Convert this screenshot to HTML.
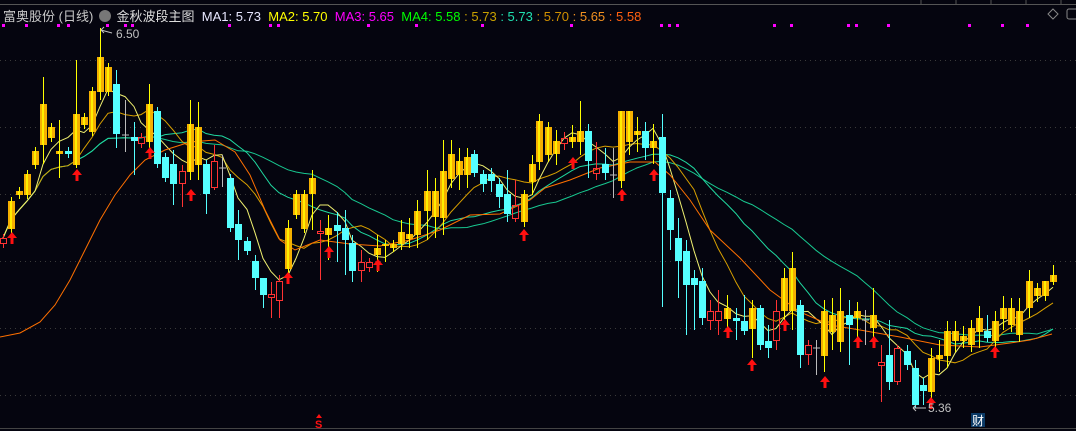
<!DOCTYPE html>
<html><head><meta charset="utf-8"><style>
html,body{margin:0;padding:0;background:#05050f;width:1076px;height:431px;overflow:hidden;font-family:"Liberation Sans","Noto Sans CJK SC",sans-serif}
.hd{position:absolute;left:3px;top:6px;font-size:13px;white-space:nowrap;color:#c8c8c8}
</style></head><body>
<svg id="s" width="1076" height="431" style="position:absolute;left:0;top:0" xmlns="http://www.w3.org/2000/svg">
<line x1="0" y1="4.5" x2="1076" y2="4.5" stroke="#555" stroke-width="1"/>
<g stroke="#555"><line x1="921" y1="0" x2="921" y2="4"/><line x1="956" y1="0" x2="956" y2="4"/><line x1="991" y1="0" x2="991" y2="4"/><line x1="1026" y1="0" x2="1026" y2="4"/><line x1="1061" y1="0" x2="1061" y2="4"/></g>
<g stroke="#3a3a3a" stroke-dasharray="1,4">
<line x1="0" y1="60.5" x2="1076" y2="60.5"/><line x1="0" y1="127.5" x2="1076" y2="127.5"/><line x1="0" y1="194.5" x2="1076" y2="194.5"/><line x1="0" y1="261.5" x2="1076" y2="261.5"/><line x1="0" y1="328.5" x2="1076" y2="328.5"/><line x1="0" y1="395.5" x2="1076" y2="395.5"/>
</g>
<line x1="0" y1="428.5" x2="1076" y2="428.5" stroke="#444"/>
<path d="M1053 9 L1058 14 L1053 19 L1048 14Z" fill="none" stroke="#888"/>
<rect x="1067" y="9" width="12" height="10" rx="2" fill="none" stroke="#888"/>
<g id="dots" fill="#ff00ff"></g>
<g id="ma"></g>
<g id="cd"></g>
<g id="ar" fill="#ff1010"></g>
<text x="116" y="38" fill="#c0c0c0" font-size="12">6.50</text>
<path d="M101 30 L104 27 M101 30 L112 33 M101 30 L104 33" stroke="#c0c0c0" fill="none"/>
<text x="928" y="412" fill="#c0c0c0" font-size="12">5.36</text>
<path d="M913 408 L926 408 M913 408 L916 405 M913 408 L916 411" stroke="#c0c0c0" fill="none"/>
<rect x="971" y="413" width="14" height="14" fill="#0b3a66"/>
<text x="972" y="425" fill="#fff" font-size="12">财</text>
<path d="M319 414 L322 418 L316 418Z" fill="#ff1010"/>
<text x="315" y="428" fill="#ff1010" font-size="11" font-weight="bold">S</text>
</svg>
<div class="hd">富奥股份 (日线) <span style="display:inline-block;width:12px;height:12px;border-radius:6px;background:#777;vertical-align:-1px;margin:0 2px"></span> <span style="color:#ddd">金秋波段主图</span>&nbsp; <span style="color:#e8e8ff">MA1: 5.73</span>&nbsp; <span style="color:#ffff00">MA2: 5.70</span>&nbsp; <span style="color:#ff00ff">MA3: 5.65</span>&nbsp; <span style="color:#00ff00">MA4: 5.58</span> <span style="color:#c8a000">: 5.73</span> <span style="color:#20e0b0">: 5.73</span> <span style="color:#d09000">: 5.70</span> <span style="color:#f09020">: 5.65</span> <span style="color:#ff6010">: 5.58</span></div>
<script>
var NS="http://www.w3.org/2000/svg";
function el(p,t,a){var e=document.createElementNS(NS,t);for(var k in a)e.setAttribute(k,a[k]);p.appendChild(e);return e;}
var D=[[3,238,244,'r'],[11,201,229,'g'],[19,191,195,'g'],[27,174,195,'g'],[35,151,165,'g'],[43,104,145,'g',77,164],[51,127,138,'g'],[59,151,154,'g',120,178],[68,151,154,'c'],[76,114,165,'g',60,168],[84,117,125,'g'],[92,91,132,'g'],[100,57,92,'g',28,100],[108,67,92,'g'],[116,84,134,'c',70,148],[125,134,136,'w',100,152],[134,137,141,'c',122,175],[141,137,144,'r'],[149,104,142,'g',84,150],[157,111,164,'c'],[165,157,178,'c'],[173,164,184,'c',150,205],[182,171,184,'r',165,207],[190,124,172,'g',100,180],[198,127,165,'g',102,180],[206,164,194,'c',160,214],[214,161,188,'r',145,190],[222,167,169,'w',155,187],[230,178,228,'c'],[238,224,240,'c',210,260],[247,241,251,'c'],[255,261,278,'c',255,290],[263,278,295,'c',280,308],[271,294,298,'r',282,318],[279,281,301,'r',275,318],[288,228,269,'g',220,280],[296,194,215,'g'],[304,194,229,'g'],[312,178,194,'g',170,230],[320,231,234,'r',220,280],[328,228,235,'g',215,260],[337,225,231,'c',212,262],[345,228,240,'c',210,275],[352,243,271,'c',235,282],[361,262,271,'r',250,282],[369,262,268,'r'],[377,248,255,'g',235,272],[385,244,246,'g',240,262],[393,244,248,'g'],[401,232,244,'g',220,250],[409,234,239,'g',218,248],[417,211,235,'g',200,248],[427,191,211,'g',170,240],[435,191,217,'g',178,238],[443,171,218,'g',140,235],[451,154,179,'g',140,188],[459,161,175,'g',148,190],[467,157,175,'g',148,188],[474,154,173,'c'],[483,174,184,'c',170,192],[491,174,181,'c',168,192],[499,184,197,'c',178,208],[507,194,214,'c',170,222],[515,205,219,'r',180,222],[524,194,222,'g',190,227],[532,164,182,'g',155,195],[539,121,162,'g',114,170],[548,127,155,'g',122,162],[556,141,154,'g',130,165],[564,138,144,'r',132,150],[572,137,142,'g',125,148],[580,131,142,'g',101,155],[588,131,161,'c',124,178],[596,168,174,'r',142,180],[605,164,173,'c',148,180],[613,174,176,'w',148,198],[621,111,181,'g',111,188],[629,111,142,'g',111,155],[637,131,135,'g',117,152],[645,131,148,'c',122,160],[653,141,148,'g',124,164],[662,137,193,'c',114,307],[670,198,230,'c',190,250],[678,238,261,'c',218,298],[686,251,285,'c',240,335],[694,278,285,'c',270,330],[702,281,318,'c',268,325],[710,311,321,'r',300,330],[718,311,321,'r',290,335],[727,308,319,'g',295,330],[736,318,321,'c',308,340],[744,321,331,'c',295,335],[752,308,329,'g',300,358],[760,308,345,'c',305,350],[768,341,348,'c',325,358],[776,311,341,'r',300,350],[784,278,311,'g',268,320],[792,268,311,'g',252,330],[800,305,355,'c',300,368],[808,345,355,'r',340,365],[816,347,349,'w',340,375],[824,311,356,'g',300,372],[832,315,332,'g',298,350],[840,311,342,'g',288,352],[849,315,325,'c',300,365],[857,311,318,'g',302,338],[865,319,321,'w',310,345],[873,315,328,'g',288,338],[881,362,366,'r',345,402],[889,355,382,'c',320,390],[897,348,382,'r',345,385],[907,351,365,'c',345,370],[915,368,405,'c',360,408],[923,385,391,'c',378,405],[931,358,392,'g',348,398],[939,355,359,'g',340,372],[947,331,356,'g',321,368],[955,331,341,'g',321,352],[963,336,341,'g',326,348],[971,328,345,'g',320,352],[979,318,332,'g',306,348],[987,331,338,'c',315,342],[995,321,341,'g',311,348],[1003,308,319,'g',296,330],[1011,308,325,'g',298,332],[1019,311,335,'g',298,342],[1029,281,308,'g',270,318],[1037,288,296,'g',283,302],[1045,281,296,'g',282,301],[1053,275,282,'g',265,285]];
var cd=document.getElementById('cd'),ma=document.getElementById('ma');
var C=[];
D.forEach(function(d){var x=d[0],t=d[1],b=d[2],ty=d[3],hi=d[4]!=null?d[4]:t-4,lo=d[5]!=null?d[5]:b+4;
 C.push(ty=='c'?b:t);
 if(ty=='g'){el(cd,'line',{x1:x+.5,y1:hi,x2:x+.5,y2:lo,stroke:'#ffff00'});el(cd,'rect',{x:x-3,y:t,width:7,height:Math.max(b-t,2),fill:'#f5b000'});el(cd,'rect',{x:x-1,y:t,width:2,height:Math.max(b-t,2),fill:'#ffee00'});}
 else if(ty=='c'){el(cd,'line',{x1:x+.5,y1:hi,x2:x+.5,y2:lo,stroke:'#55ffff'});el(cd,'rect',{x:x-3,y:t,width:7,height:Math.max(b-t,2),fill:'#55ffff'});}
 else if(ty=='r'){el(cd,'line',{x1:x+.5,y1:hi,x2:x+.5,y2:t,stroke:'#ff3333'});el(cd,'line',{x1:x+.5,y1:b,x2:x+.5,y2:lo,stroke:'#ff3333'});el(cd,'rect',{x:x-2.5,y:t+.5,width:6,height:Math.max(b-t-1,2),fill:'none',stroke:'#ff3333'});}
 else {el(cd,'line',{x1:x+.5,y1:hi,x2:x+.5,y2:lo,stroke:'#bbbbbb'});el(cd,'line',{x1:x-3,y1:t+1,x2:x+4,y2:t+1,stroke:'#bbbbbb'});}
});
function mline(n,col){var p=[];for(var i=0;i<C.length;i++){var s=0,c=0;for(var j=Math.max(0,i-n+1);j<=i;j++){s+=C[j];c++;}p.push(D[i][0]+','+(s/c).toFixed(1));}
 el(ma,'polyline',{points:p.join(' '),fill:'none',stroke:col,'stroke-width':1});}
mline(30,'#18c890');mline(20,'#20d8a0');mline(10,'#d8a000');mline(5,'#f0f070');
el(ma,'polyline',{points:'0,337 20,333 40,322 55,305 70,280 85,250 100,220 115,195 130,175 145,160 165,150 190,142 215,140 235,152 250,175 265,210 280,240 295,250 320,240 350,244 380,246 410,240 440,230 470,215 500,214 530,200 545,188 570,180 600,168 630,162 655,162 670,175 690,200 710,230 740,258 770,290 800,312 830,325 860,330 900,337 940,345 980,347 1010,343 1030,340 1052,334',fill:'none',stroke:'#ff7000','stroke-width':1});
var ar=document.getElementById('ar');
[[12,238],[77,175],[150,153],[191,195],[288,278],[329,252],[378,265],[524,235],[573,163],[622,195],[654,175],[728,332],[752,365],[785,325],[825,382],[858,342],[874,342],[931,403],[995,352]].forEach(function(a){var x=a[0],y=a[1];
 el(ar,'path',{d:'M'+x+' '+(y-6)+' L'+(x+5)+' '+(y)+' L'+(x+1.5)+' '+y+' L'+(x+1.5)+' '+(y+6)+' L'+(x-1.5)+' '+(y+6)+' L'+(x-1.5)+' '+y+' L'+(x-5)+' '+y+'Z'});});
var dt=document.getElementById('dots');
[3,26,58,68,107,125,132,229,270,278,368,416,482,571,661,669,677,774,791,848,856,888,969,1002,1027].forEach(function(x){el(dt,'rect',{x:x-1,y:24,width:3,height:3});});
</script>
</body></html>
